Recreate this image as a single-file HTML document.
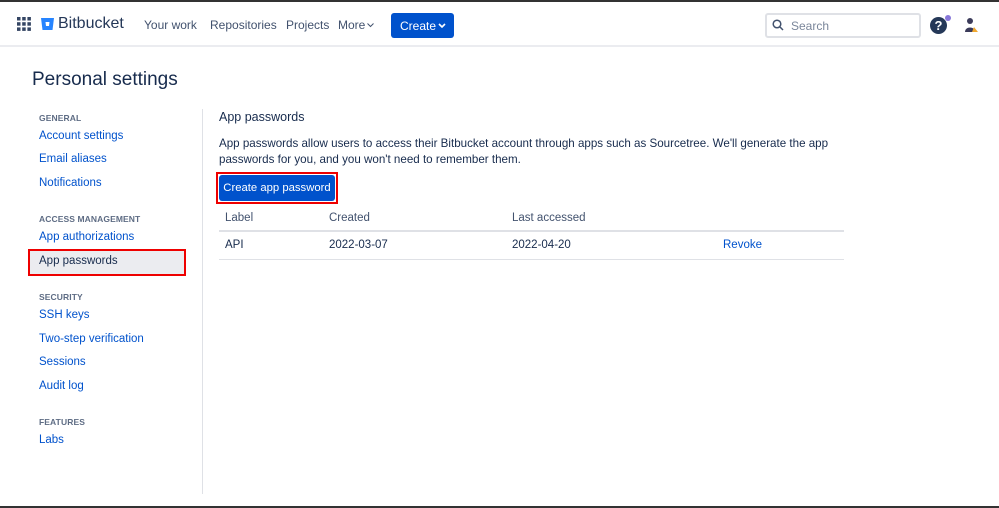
<!DOCTYPE html>
<html><head><style>
*{box-sizing:border-box;margin:0;padding:0}
body{width:999px;height:508px;overflow:hidden;background:#fff;font-family:"Liberation Sans",sans-serif;color:#172b4d;position:relative;border-top:2px solid #333;border-bottom:2px solid #333}
.hdr{position:absolute;top:0;left:0;width:999px;height:45px;border-bottom:2px solid #ebecf0}
.a{position:absolute;font-size:11.5px;color:#0052cc}
.t{position:absolute;font-size:12px}
.sm{position:absolute;font-size:8.5px;font-weight:bold;color:#5e6c84;letter-spacing:.1px}
.red{position:absolute;border:2px solid #e00}
</style></head><body>
<div class="hdr">
<svg style="position:absolute;left:17px;top:15px" width="14" height="14" viewBox="0 0 14 14" fill="#344563"><rect x="0" y="0" width="3.5" height="3.5"/><rect x="5.2" y="0" width="3.5" height="3.5"/><rect x="10.4" y="0" width="3.5" height="3.5"/><rect x="0" y="5.2" width="3.5" height="3.5"/><rect x="5.2" y="5.2" width="3.5" height="3.5"/><rect x="10.4" y="5.2" width="3.5" height="3.5"/><rect x="0" y="10.4" width="3.5" height="3.5"/><rect x="5.2" y="10.4" width="3.5" height="3.5"/><rect x="10.4" y="10.4" width="3.5" height="3.5"/></svg>
<svg style="position:absolute;left:41px;top:16px" width="13" height="13" viewBox="0 0 13 13"><path d="M0 0H13L11.5 12H1.5Z" fill="#2684ff"/><path d="M4.5 4H8.5L8 8H5Z" fill="#fff"/></svg>
<div class="t" style="left:58px;top:13px;font-size:16px;color:#253858">Bitbucket</div>
<div class="t" style="left:144px;top:16px;color:#42526e">Your work</div>
<div class="t" style="left:210px;top:16px;color:#42526e">Repositories</div>
<div class="t" style="left:286px;top:16px;color:#42526e">Projects</div>
<div class="t" style="left:338px;top:16px;color:#42526e">More</div>
<svg style="position:absolute;left:367px;top:21px" width="7" height="5" viewBox="0 0 7 5" fill="none" stroke="#42526e" stroke-width="1"><path d="M0.5 0.5L3.5 3.5L6.5 0.5"/></svg>
<div style="position:absolute;left:391px;top:11px;width:63px;height:25px;background:#0052cc;border-radius:3px;color:#fff;font-size:12px;padding:6px 0 0 9px">Create</div>
<svg style="position:absolute;left:438px;top:21px" width="8" height="5" viewBox="0 0 8 5" fill="none" stroke="#fff" stroke-width="1.6"><path d="M1 1L4 4L7 1"/></svg>
<div style="position:absolute;left:765px;top:11px;width:156px;height:25px;border:2px solid #dfe1e6;border-radius:3px;font-size:12px;color:#7a869a;padding:4px 0 0 24px">Search</div>
<svg style="position:absolute;left:772px;top:17px" width="12" height="12" viewBox="0 0 12 12" fill="none" stroke="#42526e" stroke-width="1.5"><circle cx="5" cy="5" r="3.8"/><path d="M8 8L11 11"/></svg>
<div style="position:absolute;left:930px;top:15px;width:17px;height:17px;border-radius:50%;background:#253858;color:#fff;font-size:13px;font-weight:bold;text-align:center;line-height:17px">?</div>
<div style="position:absolute;left:945px;top:13px;width:6px;height:6px;border-radius:50%;background:#8777d9"></div>
<svg style="position:absolute;left:963px;top:15px" width="16" height="16" viewBox="0 0 16 16"><circle cx="7" cy="4" r="3" fill="#3b3b5a"/><path d="M2 15C2 9 12 9 12 15Z" fill="#3b3b5a"/><path d="M11 10L15 15H9Z" fill="#f0a830"/></svg>
</div>
<div class="t" style="left:32px;top:67px;font-size:19px">Personal settings</div>
<div class="sm" style="left:39px;top:111px">GENERAL</div>
<div class="a" style="left:39px;top:128px">Account settings</div>
<div class="a" style="left:39px;top:151px">Email aliases</div>
<div class="a" style="left:39px;top:175px">Notifications</div>
<div class="sm" style="left:39px;top:212px">ACCESS MANAGEMENT</div>
<div class="a" style="left:39px;top:229px">App authorizations</div>
<div style="position:absolute;left:30px;top:249px;width:154px;height:23px;background:#ebecf0"></div>
<div class="red" style="left:28px;top:247px;width:158px;height:27px"></div>
<div class="t" style="left:39px;top:253px;font-size:11.5px">App passwords</div>
<div class="sm" style="left:39px;top:290px">SECURITY</div>
<div class="a" style="left:39px;top:307px">SSH keys</div>
<div class="a" style="left:39px;top:331px">Two-step verification</div>
<div class="a" style="left:39px;top:354px">Sessions</div>
<div class="a" style="left:39px;top:378px">Audit log</div>
<div class="sm" style="left:39px;top:415px">FEATURES</div>
<div class="a" style="left:39px;top:432px">Labs</div>
<div style="position:absolute;left:202px;top:107px;width:1px;height:385px;background:#dfe1e6"></div>
<div class="t" style="left:219px;top:108px;font-size:12.5px">App passwords</div>
<div class="t" style="left:219px;top:134px;font-size:11.6px;line-height:16px;width:630px">App passwords allow users to access their Bitbucket account through apps such as Sourcetree. We'll generate the app passwords for you, and you won't need to remember them.</div>
<div class="red" style="left:216px;top:170px;width:122px;height:32px"></div>
<div style="position:absolute;left:219px;top:173px;width:116px;height:26px;background:#0052cc;border-radius:3px;color:#fff;font-size:11.3px;text-align:center;line-height:26px">Create app password</div>
<div class="t" style="left:225px;top:210px;font-size:11.5px;color:#42526e">Label</div>
<div class="t" style="left:329px;top:210px;font-size:11.5px;color:#42526e">Created</div>
<div class="t" style="left:512px;top:210px;font-size:11.5px;color:#42526e">Last accessed</div>
<div style="position:absolute;left:219px;top:228px;width:625px;height:2px;background:#dfe1e6"></div>
<div class="t" style="left:225px;top:237px;font-size:11.5px">API</div>
<div class="t" style="left:329px;top:237px;font-size:11.5px">2022-03-07</div>
<div class="t" style="left:512px;top:237px;font-size:11.5px">2022-04-20</div>
<div class="a" style="left:723px;top:237px">Revoke</div>
<div style="position:absolute;left:219px;top:257px;width:625px;height:1px;background:#dfe1e6"></div>
</body></html>
